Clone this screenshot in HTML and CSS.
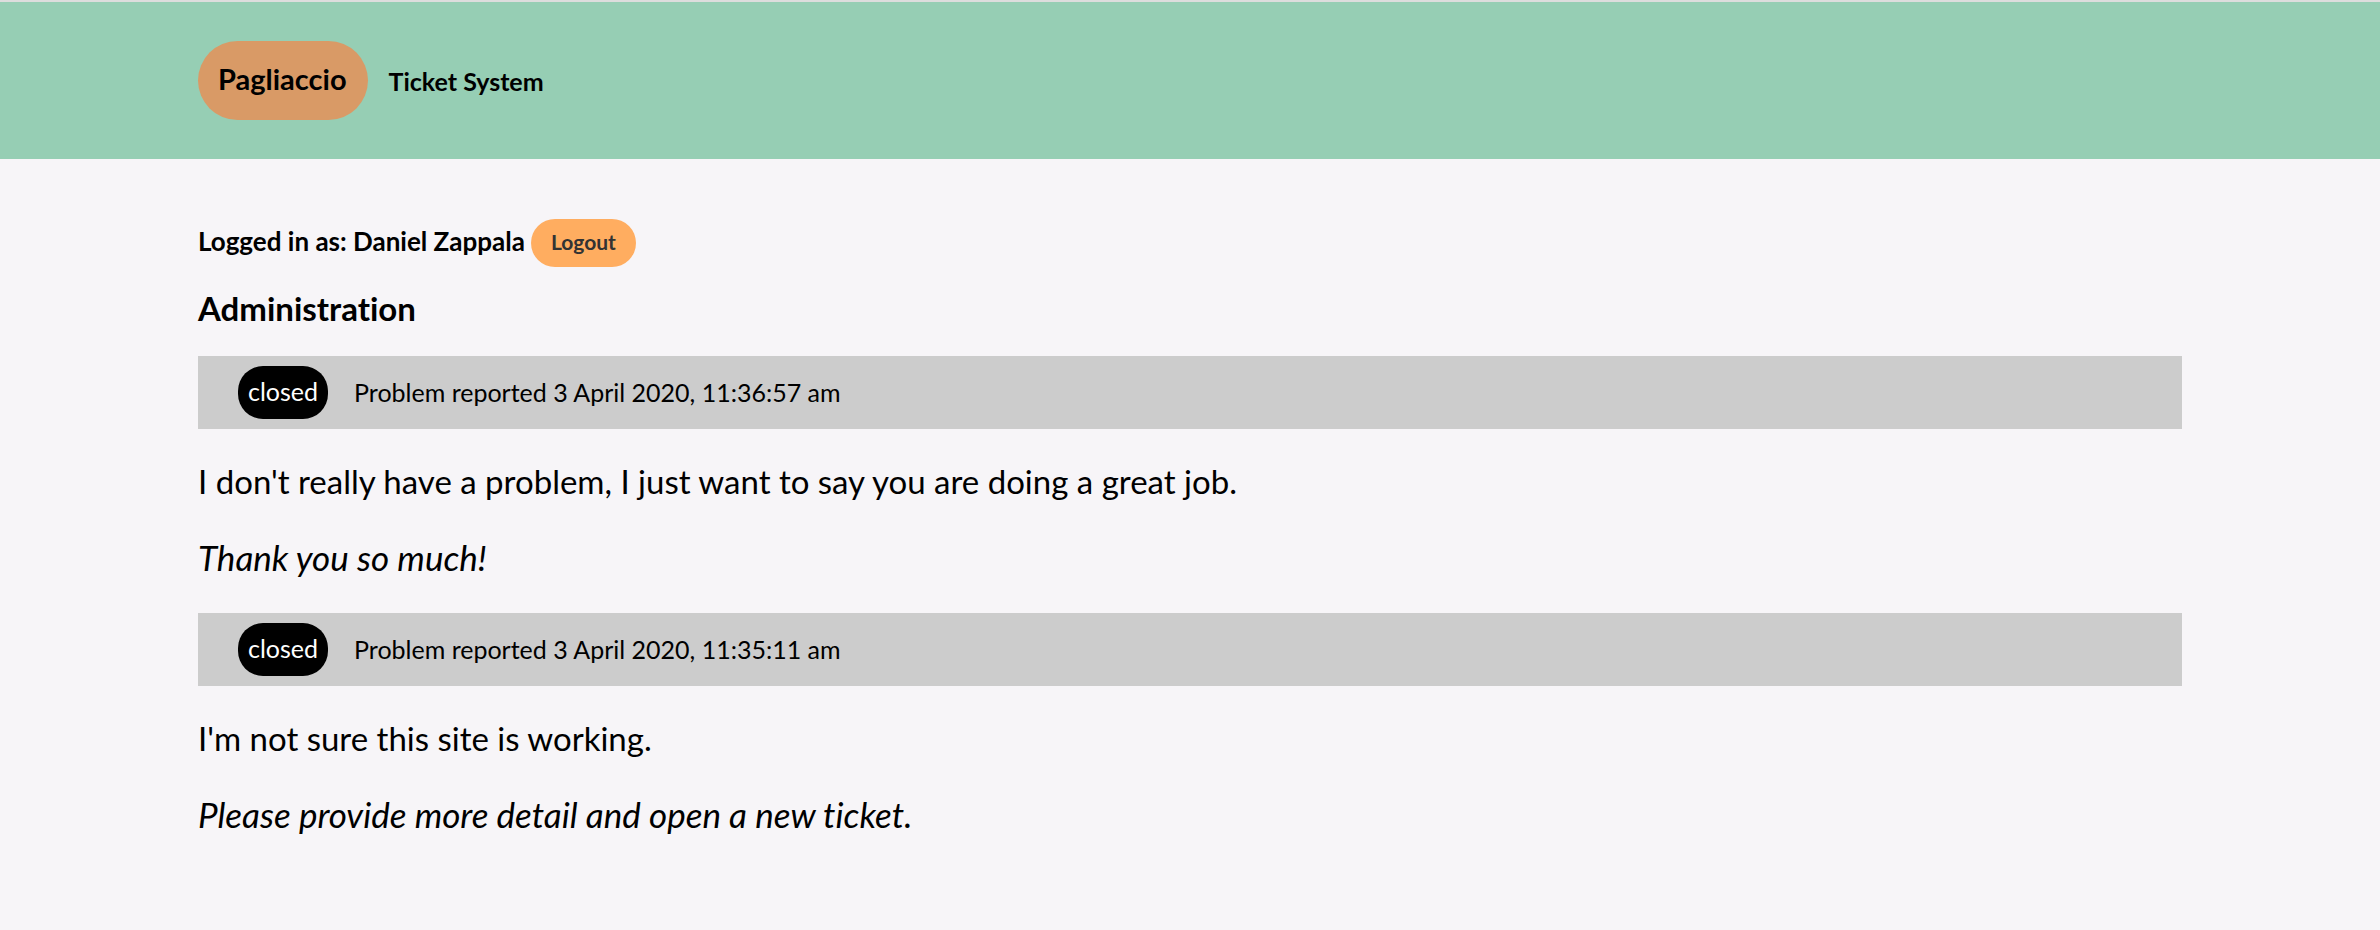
FILE: index.html
```html
<!DOCTYPE html>
<html lang="en">
<head>
<meta charset="utf-8">
<title>Pagliaccio Ticket System</title>
<link rel="stylesheet" href="styles.css">
</head>
<body>
<header class="header">
  <nav class="nav">
    <a class="brand" href="#">Pagliaccio</a>
    <a class="nav-link" href="#">Ticket System</a>
  </nav>
</header>
<main class="content">
  <div class="user">
    <h2 class="user-name">Logged in as: Daniel Zappala</h2>
    <button class="logout" type="button">Logout</button>
  </div>
  <h1 class="title">Administration</h1>
  <article class="ticket">
    <div class="ticket-bar">
      <span class="status">closed</span>
      <span class="reported">Problem reported 3 April 2020, 11:36:57 am</span>
    </div>
    <p class="problem">I don't really have a problem, I just want to say you are doing a great job.</p>
    <p class="response">Thank you so much!</p>
  </article>
  <article class="ticket">
    <div class="ticket-bar">
      <span class="status">closed</span>
      <span class="reported">Problem reported 3 April 2020, 11:35:11 am</span>
    </div>
    <p class="problem">I'm not sure this site is working.</p>
    <p class="response">Please provide more detail and open a new ticket.</p>
  </article>
</main>
</body>
</html>
```
FILE: styles.css
```css
* { box-sizing: border-box; }
body {
  margin: 0;
  background: #f7f5f8;
  color: #000;
  font-family: Lato, sans-serif;
  font-variant-ligatures: none;
}
.header {
  padding: 39px 198px;
  background: #96ceb4;
  border-top: 2px solid #ddd;
}
.nav { display: flex; align-items: center; gap: 21px; }
.brand {
  padding: 18px 21px 21px 20px;
  border-radius: 40px;
  background: #d99a66;
  color: #000;
  font-size: 29px;
  line-height: 40px;
  font-weight: 700;
  text-decoration: none;
}
.nav-link {
  color: #000;
  font-size: 25px;
  line-height: 32px;
  font-weight: 700;
  text-decoration: none;
}
.content { padding: 60px 198px; }
.user { display: flex; align-items: center; gap: 6px; }
.user-name { margin: 0; padding-bottom: 4px; font-size: 26px; line-height: 32px; font-weight: 700; }
.logout {
  padding: 7px 20px 9px;
  border: 0;
  border-radius: 24px;
  background: #ffad60;
  color: #333;
  font-family: inherit;
  font-size: 21px;
  line-height: 32px;
  font-weight: 700;
}
.title { margin: 19px 0 26px; font-size: 33px; line-height: 44px; font-weight: 700; }
.ticket-bar {
  display: flex;
  align-items: center;
  gap: 26px;
  padding: 10px 40px;
  background: #ccc;
}
.status {
  padding: 9px 10px 11px;
  border-radius: 25px;
  background: #000;
  color: #fff;
  font-size: 25px;
  line-height: 33px;
}
.reported { padding-bottom: 2px; font-size: 25px; line-height: 32px; }
.problem { margin: 30px 0 32px; font-size: 33px; line-height: 44px; }
.response { margin: 32px 0 34px; font-size: 35px; line-height: 44px; font-style: italic; }
```
